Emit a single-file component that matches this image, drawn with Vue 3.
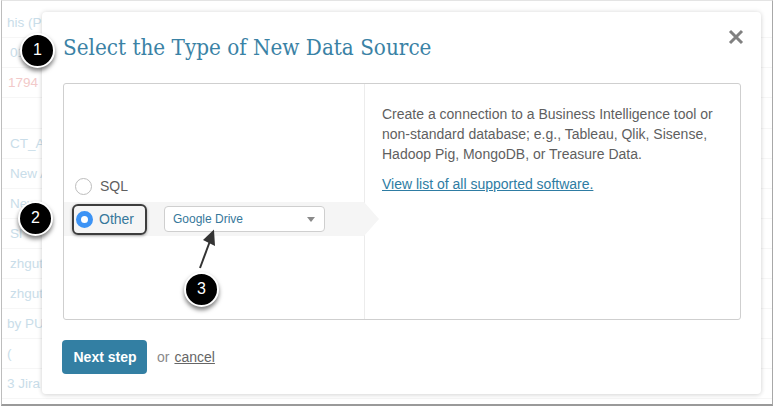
<script setup>
const rows = [
  { text: 'his (Pl', cls: '' },
  { text: '01', cls: 'ind' },
  { text: '1794 (', cls: 'red' },
  { text: '', cls: 'blank' },
  { text: 'CT_A', cls: 'ind' },
  { text: 'New A', cls: 'ind' },
  { text: 'New', cls: 'ind' },
  { text: 'Sl', cls: 'ind' },
  { text: 'zhgut', cls: 'ind' },
  { text: 'zhgut', cls: 'ind' },
  { text: 'by PU', cls: '' },
  { text: '(', cls: '' },
  { text: '3 Jira (', cls: '' }
]
const markers = [
  { n: 1, cls: 'm1' },
  { n: 2, cls: 'm2' },
  { n: 3, cls: 'm3' }
]
</script>

<template>
  <div class="screen">
    <div class="frame">
      <div v-for="(r, i) in rows" :key="i" class="row" :class="r.cls">{{ r.text }}</div>
    </div>

    <div class="modal">
      <svg class="close" width="16" height="16" viewBox="0 0 16 16">
        <path d="M2 2 L14 14 M14 2 L2 14" stroke="#808080" stroke-width="3" fill="none" />
      </svg>
      <h1 class="title">Select the Type of New Data Source</h1>
      <div class="panel">
        <div class="left">
          <label class="opt sql"><span class="radio"></span><span>SQL</span></label>
          <div class="band">
            <label class="opt other"><span class="radio on"></span><span>Other</span></label>
            <div class="select">
              <span>Google Drive</span>
              <span class="caret"></span>
            </div>
          </div>
        </div>
        <div class="right">
          <p>Create a connection to a Business Intelligence tool or non-standard database; e.g., Tableau, Qlik, Sisense, Hadoop Pig, MongoDB, or Treasure Data.</p>
          <a class="list">View list of all supported software.</a>
        </div>
      </div>
      <div class="foot">
        <button class="next">Next step</button>
        <span class="or">or</span>
        <a class="cancel">cancel</a>
      </div>
    </div>

    <svg class="arrow" width="40" height="50" viewBox="0 0 40 50">
      <path d="M6 40 L16 13" stroke="#333" stroke-width="2" fill="none" />
      <path d="M20 1.5 L21 18 L9 12 Z" fill="#333" />
    </svg>
    <div v-for="m in markers" :key="m.n" class="marker" :class="m.cls">{{ m.n }}</div>
  </div>
</template>

<style>
html, body { margin: 0; background: #fff; }
</style>

<style scoped>
.screen {
  position: relative;
  width: 774px;
  height: 408px;
  overflow: hidden;
  background: #fff;
  font-family: "Liberation Sans", Arial, sans-serif;
}
.frame {
  box-sizing: border-box;
  width: 772px;
  height: 406px;
  margin-left: 1px;
  padding-top: 7px;
  border: 1px solid #e4e4e4;
  border-left-color: #bdbdbd;
  border-right-color: #a8a8a8;
  border-bottom: 2px solid #9a9a9a;
  overflow: hidden;
}
.row {
  box-sizing: border-box;
  height: 30px;
  line-height: 29px;
  padding-left: 5px;
  font-size: 13.5px;
  color: #c9dde9;
  border-bottom: 1px solid #f6f6f6;
}
.row.blank { height: 31px; }
.row.ind { padding-left: 8px; }
.row.red { color: #f2c9c9; padding-left: 6px; }

.modal {
  position: absolute;
  left: 42px;
  top: 12px;
  box-sizing: border-box;
  width: 719px;
  height: 382px;
  padding: 0 20px 0 21px;
  background: #fff;
  border-radius: 4px;
  box-shadow: 0 0 5px rgba(0, 0, 0, 0.14), 0 2px 5px rgba(0, 0, 0, 0.06);
}
.close {
  position: absolute;
  right: 17px;
  top: 17px;
}
.title {
  margin: 0;
  height: 71px;
  padding-top: 20px;
  box-sizing: border-box;
  font-family: "DejaVu Serif", "Liberation Serif", serif;
  font-stretch: condensed;
  font-weight: 400;
  font-size: 22.25px;
  line-height: 30px;
  color: #3a82a5;
  white-space: nowrap;
}
.panel {
  display: flex;
  box-sizing: border-box;
  height: 237px;
  border: 1px solid #cfcfcf;
  border-radius: 3px;
}
.left {
  box-sizing: border-box;
  width: 301px;
  border-right: 1px solid #ececec;
  padding-top: 86px;
  display: flex;
  flex-direction: column;
}
.opt {
  display: flex;
  align-items: center;
  gap: 6px;
  font-size: 14px;
  color: #5f5f5f;
}
.sql {
  height: 32px;
  padding-left: 11px;
  gap: 8px;
}
.radio {
  box-sizing: border-box;
  width: 17px;
  height: 17px;
  border-radius: 50%;
  border: 1px solid #bdbdbd;
  background: #fff;
  flex: none;
}
.radio.on {
  border: 5.5px solid #3c93f5;
  background: #fff;
}
.band {
  position: relative;
  height: 34px;
  background: #f5f5f5;
  display: flex;
  align-items: center;
}
.band::after {
  content: "";
  position: absolute;
  left: 300px;
  top: 0;
  border-left: 15px solid #f5f5f5;
  border-top: 17px solid transparent;
  border-bottom: 17px solid transparent;
}
.other {
  box-sizing: border-box;
  width: 75px;
  height: 31px;
  margin-left: 8px;
  padding-left: 2px;
  border: 2px solid #3d3d3d;
  border-radius: 6px;
  box-shadow: 0 1px 3px rgba(0, 0, 0, 0.35);
  color: #36789b;
}
.select {
  box-sizing: border-box;
  width: 161px;
  height: 26px;
  margin-left: 17px;
  padding: 0 8px;
  background: #fff;
  border: 1px solid #cfcfcf;
  border-radius: 4px;
  display: flex;
  align-items: center;
  justify-content: space-between;
  font-size: 12px;
  color: #36789b;
}
.caret {
  width: 0;
  height: 0;
  margin-right: 1px;
  border-left: 4.5px solid transparent;
  border-right: 4.5px solid transparent;
  border-top: 5px solid #8a8a8a;
}
.right {
  flex: 1;
  padding: 20px 17px 0;
  font-size: 14px;
  line-height: 20px;
  color: #5f5f5f;
}
.right p {
  margin: 0 0 10px;
}
.list {
  color: #2e7ca3;
  text-decoration: underline;
}
.foot {
  display: flex;
  align-items: center;
  height: 34px;
  margin-top: 20px;
  margin-left: -1px;
  font-size: 14px;
}
.next {
  width: 85px;
  height: 34px;
  border: 0;
  padding: 0 0 0 1px;
  border-radius: 4px;
  background: #337fa3;
  color: #fff;
  font-family: inherit;
  font-size: 14px;
  font-weight: 700;
}
.or {
  margin-left: 10px;
  color: #8a8a8a;
}
.cancel {
  margin-left: 5px;
  color: #666;
  text-decoration: underline;
}
.arrow {
  position: absolute;
  left: 194px;
  top: 228px;
}
.marker {
  position: absolute;
  box-sizing: border-box;
  width: 35px;
  height: 35px;
  border-radius: 50%;
  background: #000;
  border: 2px solid #fff;
  box-shadow: 0 3px 4px rgba(0, 0, 0, 0.5);
  color: #fff;
  font-size: 16px;
  line-height: 30px;
  text-align: center;
}
.m1 { left: 20px; top: 33px; }
.m2 { left: 18px; top: 201px; }
.m3 { left: 184px; top: 272px; }
</style>
